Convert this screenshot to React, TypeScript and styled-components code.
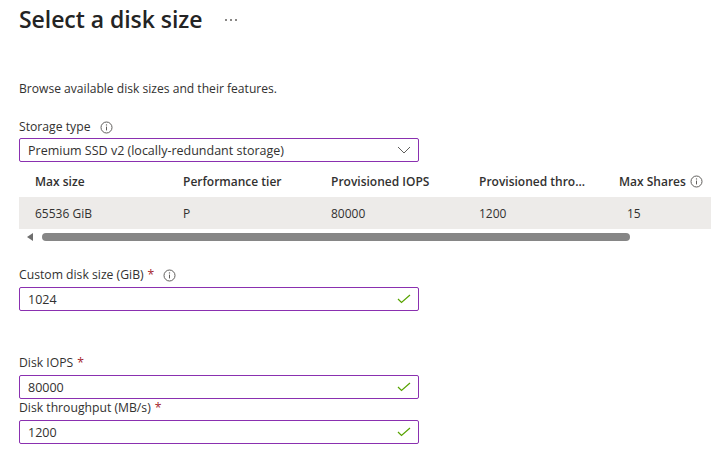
import React from "react";
import styled, { createGlobalStyle } from "styled-components";

const Global = createGlobalStyle`
  html, body { margin: 0; padding: 0; background: #ffffff; }
  body {
    font-family: "Open Sans", "Noto Sans", "Liberation Sans", sans-serif;
    color: #323130;
    font-size: 13px;
    overflow: hidden;
  }
`;

const Page = styled.div`
  width: 711px;
  height: 468px;
  overflow: hidden;
  padding: 3px 0 0 19px;
  box-sizing: border-box;
  display: flex;
  flex-direction: column;
`;

const TitleRow = styled.div`
  display: flex;
  align-items: center;
  height: 32px;
`;

const Title = styled.h1`
  margin: 0;
  font-size: 23px;
  font-weight: 600;
  line-height: 32px;
  color: #242424;
  letter-spacing: -0.05px;
`;

const More = styled.span`
  margin-left: 23px;
  display: flex;
  gap: 3px;
  align-items: center;
  height: 32px;
  padding-top: 2px;
`;

const Dot = styled.span`
  width: 2px;
  height: 2px;
  background: #8a8886;
`;

const Description = styled.p`
  margin: 45px 0 0;
  line-height: 18px;
  font-size: 12.1px;
`;

const Label = styled.label<{ $mt: number }>`
  display: flex;
  align-items: center;
  margin-top: ${(p) => p.$mt}px;
  line-height: 18px;
  height: 18px;
  font-size: 12.2px;
`;

const Req = styled.span`
  color: #a4262c;
  margin-left: 4px;
`;

const InfoWrap = styled.span<{ $ml: number }>`
  display: inline-flex;
  margin-left: ${(p) => p.$ml}px;
`;

const Box = styled.div<{ $mt: number }>`
  margin-top: ${(p) => p.$mt}px;
  width: 400px;
  height: 24px;
  box-sizing: border-box;
  border: 1px solid #8a30b0;
  border-radius: 2px;
  display: flex;
  align-items: center;
  padding: 0 7px 0 8px;
  font-size: 12.5px;
`;

const BoxText = styled.span`
  flex: 1;
  white-space: nowrap;
`;

const TableWrap = styled.div`
  width: 692px;
  overflow: hidden;
`;

const Row = styled.div<{ $head?: boolean }>`
  display: grid;
  grid-template-columns: 148px 148px 148px 148px 160px;
  width: 752px;
  height: ${(p) => (p.$head ? 35 : 32)}px;
  padding-top: ${(p) => (p.$head ? 3 : 0)}px;
  box-sizing: border-box;
  align-items: center;
  background: ${(p) => (p.$head ? "transparent" : "#edebe9")};
  font-weight: ${(p) => (p.$head ? 600 : 400)};
  font-size: 12px;
`;

const Cell = styled.div<{ $pl?: number }>`
  padding-left: ${(p) => p.$pl ?? 16}px;
  white-space: nowrap;
  display: flex;
  align-items: center;
`;

const ScrollBar = styled.div`
  margin-top: 4px;
  height: 8px;
  display: flex;
  align-items: center;
  padding-left: 8px;
`;

const Arrow = styled.span`
  width: 0;
  height: 0;
  border-top: 4px solid transparent;
  border-bottom: 4px solid transparent;
  border-right: 6px solid #6e6e6e;
`;

const Thumb = styled.span`
  margin-left: 9px;
  width: 588px;
  height: 8px;
  border-radius: 4px;
  background: #868686;
`;

const Info = () => (
  <svg width="13" height="13" viewBox="0 0 13 13">
    <circle cx="6.5" cy="6.5" r="5.5" fill="none" stroke="#605e5c" strokeWidth="1" />
    <line x1="6.5" y1="5.6" x2="6.5" y2="9.4" stroke="#605e5c" strokeWidth="1" />
    <circle cx="6.5" cy="3.9" r="0.7" fill="#605e5c" />
  </svg>
);

const Chevron = () => (
  <svg width="14" height="8" viewBox="0 0 14 8">
    <polyline points="1,1 7,7 13,1" fill="none" stroke="#605e5c" strokeWidth="1" />
  </svg>
);

const Check = () => (
  <svg width="14" height="10" viewBox="0 0 14 10">
    <polyline points="1,5 4.5,8.5 13,1" fill="none" stroke="#57a300" strokeWidth="1.2" />
  </svg>
);

const Field = ({ label, value, mt, req, info }: { label: string; value: string; mt: number; req?: boolean; info?: boolean }) => (
  <>
    <Label $mt={mt}>
      {label}
      {req && <Req>*</Req>}
      {info && (
        <InfoWrap $ml={9}>
          <Info />
        </InfoWrap>
      )}
    </Label>
    <Box $mt={3}>
      <BoxText>{value}</BoxText>
      <Check />
    </Box>
  </>
);

export default function App() {
  return (
    <>
      <Global />
      <Page>
        <TitleRow>
          <Title>Select a disk size</Title>
          <More>
            <Dot />
            <Dot />
            <Dot />
          </More>
        </TitleRow>
        <Description>Browse available disk sizes and their features.</Description>
        <Label $mt={20}>
          Storage type
          <InfoWrap $ml={9}>
            <Info />
          </InfoWrap>
        </Label>
        <Box $mt={2}>
          <BoxText>Premium SSD v2 (locally-redundant storage)</BoxText>
          <Chevron />
        </Box>
        <TableWrap>
          <Row $head>
            <Cell>Max size</Cell>
            <Cell>Performance tier</Cell>
            <Cell>Provisioned IOPS</Cell>
            <Cell>Provisioned thro...</Cell>
            <Cell $pl={8}>
              Max Shares
              <InfoWrap $ml={4}>
                <Info />
              </InfoWrap>
            </Cell>
          </Row>
          <Row>
            <Cell>65536 GiB</Cell>
            <Cell>P</Cell>
            <Cell>80000</Cell>
            <Cell>1200</Cell>
            <Cell>15</Cell>
          </Row>
        </TableWrap>
        <ScrollBar>
          <Arrow />
          <Thumb />
        </ScrollBar>
        <Field label="Custom disk size (GiB)" value="1024" mt={25} req info />
        <Field label="Disk IOPS" value="80000" mt={43} req />
        <Field label="Disk throughput (MB/s)" value="1200" mt={0} req />
      </Page>
    </>
  );
}
